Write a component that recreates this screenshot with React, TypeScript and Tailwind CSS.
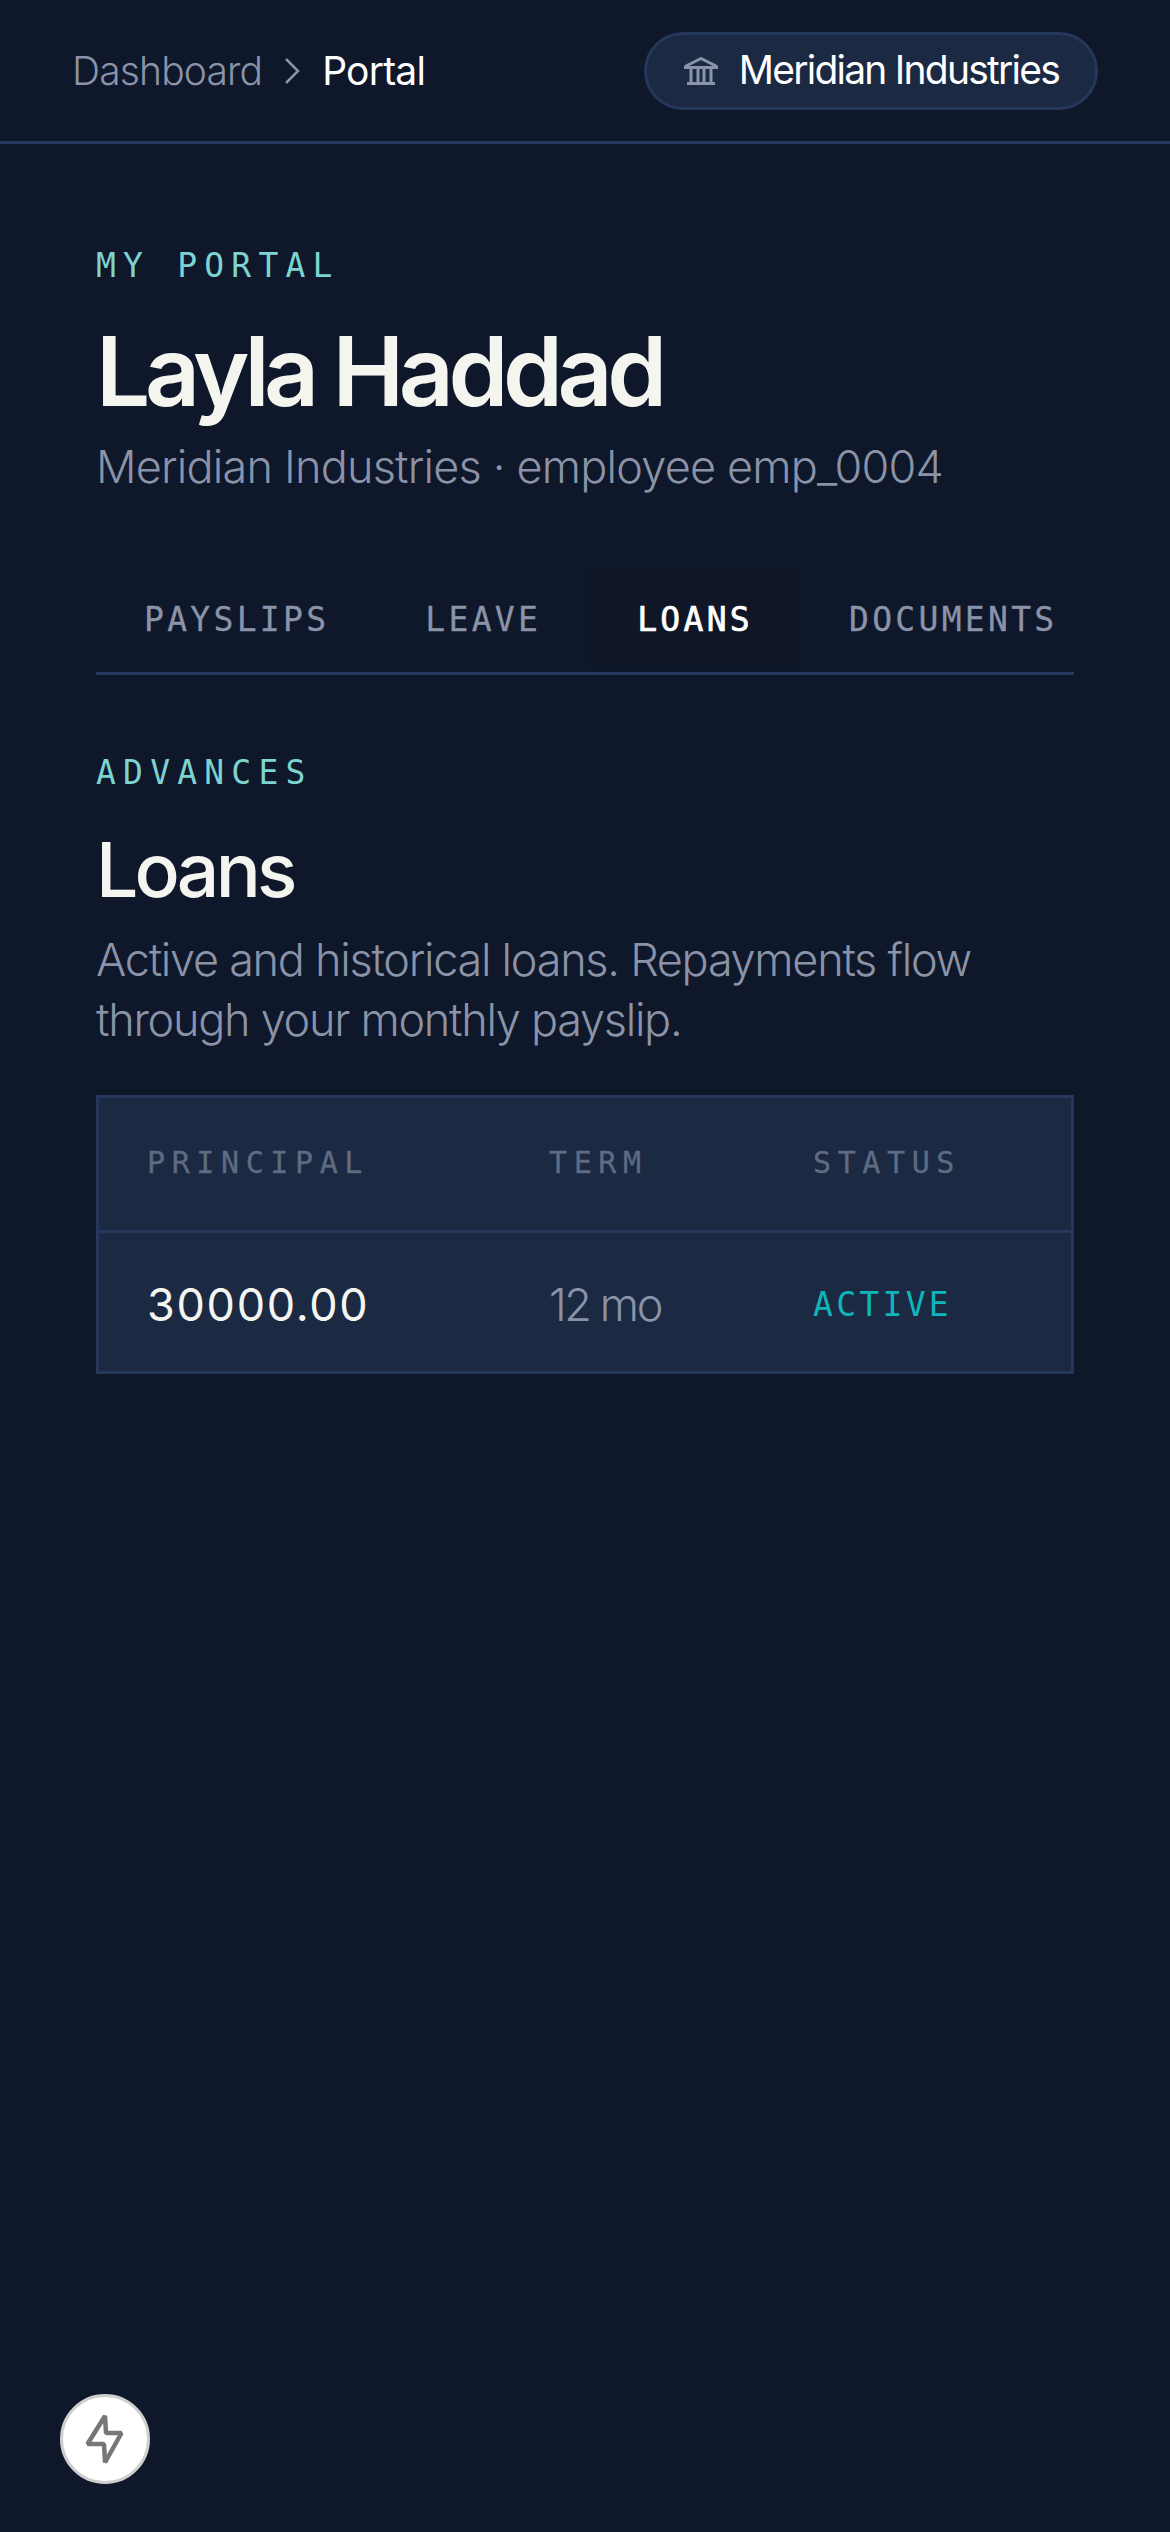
const sans = "font-['Inter','Noto_Sans',sans-serif]";
const mono = "font-['DejaVu_Sans_Mono','Liberation_Mono',monospace]";

function Bank() {
  return (
    <svg width="34" height="28" viewBox="0 0 34 28" fill="none" stroke="#8a93a8" strokeWidth="3" className="shrink-0">
      <path d="M1 9.5 17 1.5l16 8" />
      <path d="M0 10.5h34" />
      <path d="M7 11v14M14 11v14M20 11v14M27 11v14" />
      <path d="M3 26.5h28" />
    </svg>
  );
}

function Bolt() {
  return (
    <svg width="42" height="52" viewBox="0 0 42 52" fill="none" stroke="#777" strokeWidth="4.5" strokeLinejoin="bevel">
      <path d="M21 3 3.5 31H20L21 49.5 37.5 20H22Z" />
    </svg>
  );
}

export default function App() {
  return (
    <div className={`${sans} relative min-h-[2532px] bg-[#0f172a] text-[#f5f5f0]`}>
      <nav className="flex h-[144px] items-center justify-between border-b-[3px] border-[#25375a] px-[72px]">
        <div className="flex items-center text-[39px] leading-[48px]">
          <span className="font-light tracking-[-0.85px] text-[#8a93a8]">Dashboard</span>
          <svg width="18" height="30" viewBox="0 0 18 30" fill="none" stroke="#8a93a8" strokeWidth="2.5" className="mx-[21px]">
            <path d="M3 3l12 12-12 12" />
          </svg>
          <span className="tracking-[-0.8px] text-white">Portal</span>
        </div>
        <div className="flex h-[78px] items-center gap-[21px] rounded-full border-[3px] border-[#25375a] bg-[#1b2942] pl-[37px] pr-[36px] text-[39px] tracking-[-1.77px] text-white">
          <Bank />
          <span>Meridian Industries</span>
        </div>
      </nav>
      <main className="px-[96px] pt-[98px]">
        <p className={`${mono} text-[33px] leading-[48px] tracking-[7.2px] text-[#7dd3d0]`}>MY PORTAL</p>
        <h1 className="mt-[28px] text-[96px] font-semibold leading-[106px] tracking-[-5.4px]">Layla Haddad</h1>
        <p className="mt-[13px] text-[45px] font-light leading-[60px] tracking-[-0.8px] text-[#8a93a8]">Meridian Industries · employee emp_0004</p>
        <div className={`${mono} mt-[70px] flex h-[108px] items-start overflow-hidden border-b-[3px] border-[#25375a] text-[33px] tracking-[3.3px] text-[#8a93a8] [-webkit-text-stroke:0.3px]`}>
          <div className="px-[48px] pt-[29px] leading-[48px]">PAYSLIPS</div>
          <div className="px-[48px] pt-[29px] leading-[48px]">LEAVE</div>
          <div className="h-[100px] bg-[#0e1628] px-[48px] pt-[29px] leading-[48px] text-white [-webkit-text-stroke:0.7px_white]">LOANS</div>
          <div className="px-[48px] pt-[29px] leading-[48px]">DOCUMENTS</div>
        </div>
        <p className={`${mono} mt-[74px] text-[33px] leading-[48px] tracking-[7.2px] text-[#7dd3d0]`}>ADVANCES</p>
        <h2 className="mt-[28px] text-[75px] font-medium leading-[90px] tracking-[-3.8px]">Loans</h2>
        <p className="mt-[15px] text-[45px] font-light leading-[60px] tracking-[-1.27px] text-[#8a93a8]">
          Active and historical loans. Repayments flow<br />through your monthly payslip.
        </p>
        <div className="mt-[45px] border-[3px] border-[#25375a] bg-[#1b2942]">
          <div className={`${mono} grid h-[135px] grid-cols-[402px_264px_1fr] items-center border-b-[3px] border-[#25375a] pb-[3px] text-[30px] tracking-[6.6px] text-[#5f6b82] [-webkit-text-stroke:0.3px]`}>
            <div className="pl-[48px]">PRINCIPAL</div>
            <div className="pl-[48px]">TERM</div>
            <div className="pl-[48px]">STATUS</div>
          </div>
          <div className="grid h-[138px] grid-cols-[402px_264px_1fr] items-center pt-[5px] text-[45px]">
            <div className="pl-[48px] tracking-[1.7px]">30000.00</div>
            <div className="pl-[48px] font-light tracking-[-2.4px] text-[#8a93a8]">12 mo</div>
            <div className={`${mono} pl-[48px] text-[33px] tracking-[3.3px] text-[#0fb5ba]`}>ACTIVE</div>
          </div>
        </div>
      </main>
      <button className="absolute left-[60px] top-[2394px] flex h-[90px] w-[90px] items-center justify-center rounded-full border-[3px] border-[#cfcfcf] bg-white">
        <Bolt />
      </button>
    </div>
  );
}
